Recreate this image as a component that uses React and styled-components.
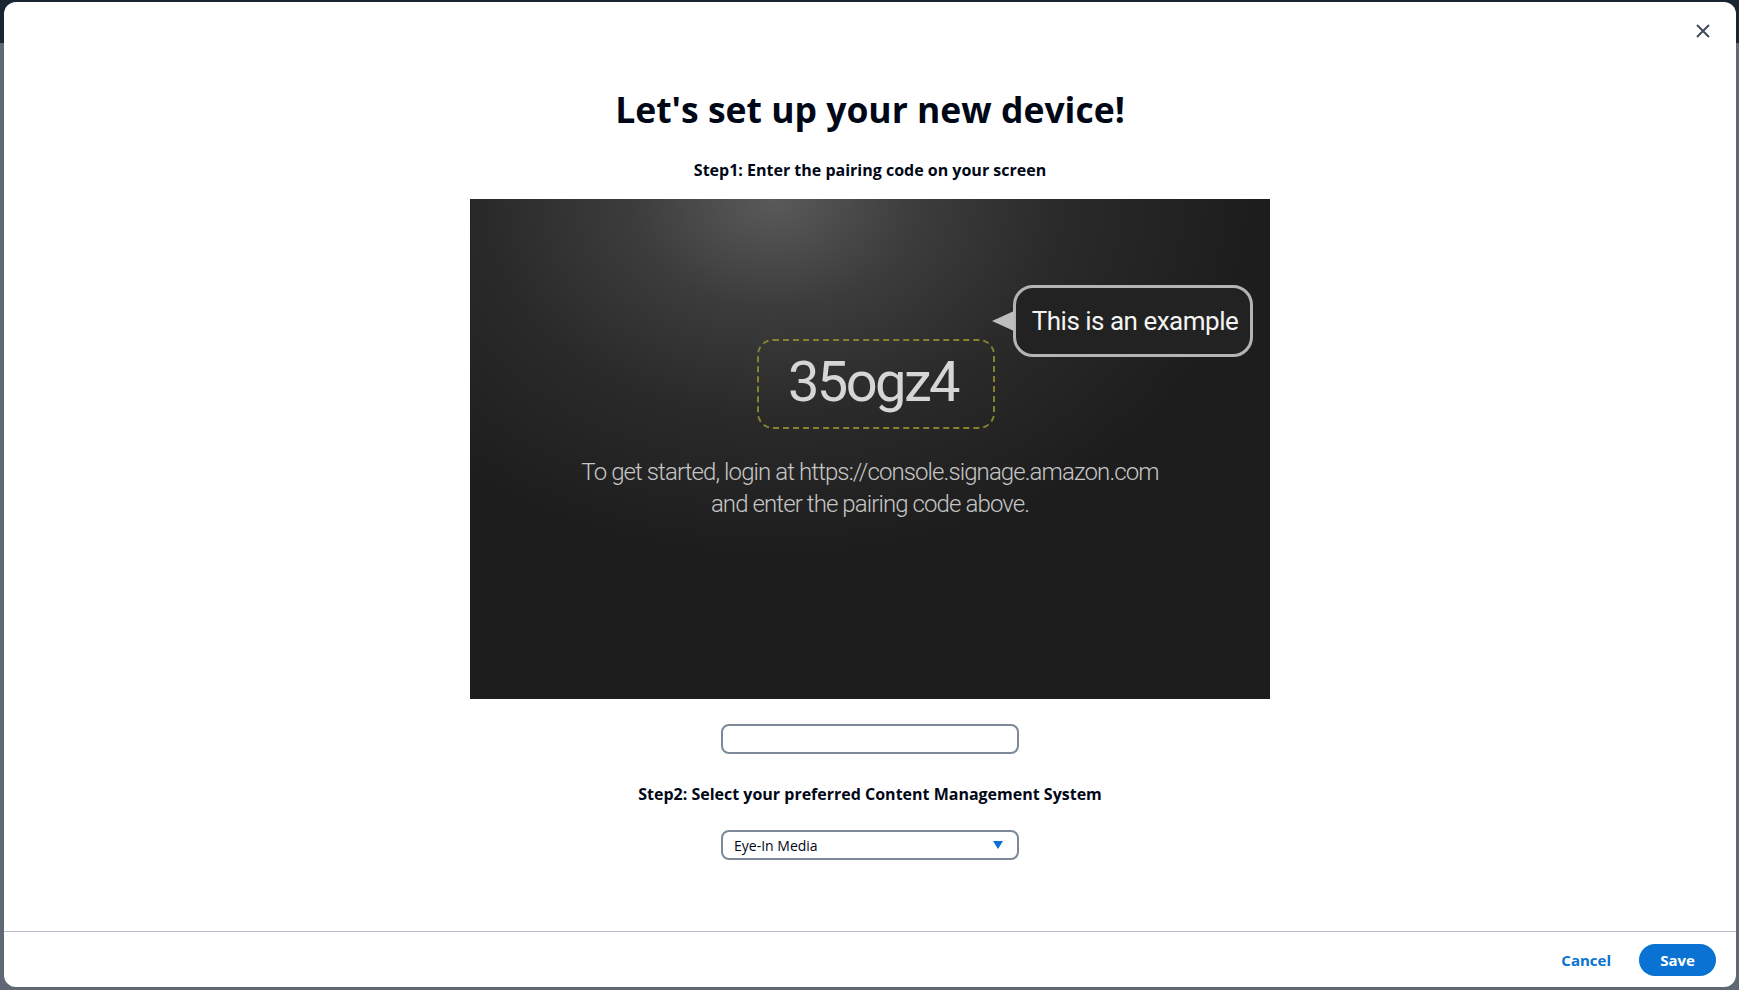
import React from 'react'
import styled, { createGlobalStyle } from 'styled-components'

const GlobalStyle = createGlobalStyle`
  html, body {
    margin: 0;
    padding: 0;
  }
  body {
    font-family: "Open Sans", "Noto Sans", sans-serif;
    color: #000716;
  }
  * {
    box-sizing: border-box;
  }
`

const Backdrop = styled.div`
  width: 1739px;
  height: 990px;
  padding: 2px 3px 3px 4px;
  background: linear-gradient(#1b2531 0, #1b2531 43px, #5f6873 43px, #5f6873 100%);
  display: flex;
`

const Modal = styled.div`
  position: relative;
  flex: 1;
  display: flex;
  flex-direction: column;
  background: #fff;
  border-radius: 12px;
  overflow: hidden;
`

const CloseButton = styled.button`
  position: absolute;
  top: 19px;
  right: 23px;
  width: 20px;
  height: 20px;
  padding: 0;
  border: none;
  background: none;
  display: flex;
  align-items: center;
  justify-content: center;
  cursor: pointer;
`

const Body = styled.div`
  flex: 1;
  display: flex;
  flex-direction: column;
  align-items: center;
  padding-top: 85px;
`

const Title = styled.h1`
  margin: 0;
  font-size: 35.5px;
  line-height: 44px;
  font-weight: 700;
  color: #000716;
`

const StepLabel = styled.p`
  margin: ${p => p.$top}px 0 0;
  font-size: 16px;
  line-height: 22px;
  font-weight: 700;
  color: #000716;
`

const Screen = styled.div`
  position: relative;
  margin-top: 18px;
  width: 800px;
  height: 500px;
  background-color: #1d1d1d;
  background-image: radial-gradient(ellipse 480px 360px at 38% 0%, #5a5a5a 0%, #3c3c3c 30%, #2a2a2a 60%, #1d1d1d 100%);
  font-family: Roboto, "Liberation Sans", sans-serif;
`

const CodeBox = styled.div`
  position: absolute;
  left: 287px;
  top: 140px;
  width: 238px;
  height: 90px;
  border: 2px dashed #858230;
  border-radius: 16px;
  display: flex;
  align-items: center;
  justify-content: center;
  color: #d6d6d6;
  font-size: 56px;
  letter-spacing: -2.6px;
  font-weight: 400;
  padding: 0 6px 4px 0;
`

const Bubble = styled.div`
  position: absolute;
  left: 543px;
  top: 86px;
  width: 240px;
  height: 72px;
  border: 3px solid #b4b4b4;
  border-radius: 20px;
  background: #222;
  display: flex;
  align-items: center;
  justify-content: center;
  color: #f4f4f4;
  font-size: 26px;
  letter-spacing: -0.5px;
  padding-left: 4px;

  &::before {
    content: '';
    position: absolute;
    left: -24px;
    top: 33px;
    border-style: solid;
    border-width: 10px 22px 10px 0;
    border-color: transparent #bdbdbd transparent transparent;
    transform: translateY(-50%);
  }
`

const ScreenText = styled.div`
  position: absolute;
  left: 0;
  right: 0;
  top: 257px;
  text-align: center;
  color: #c6c6c6;
  font-size: 24px;
  font-weight: 300;
  line-height: 32px;
  letter-spacing: -0.9px;
`

const Field = styled.div`
  margin-top: ${p => p.$top}px;
  width: 298px;
  height: 30px;
  border: 2px solid #7d8998;
  border-radius: 8px;
  background: #fff;
  display: flex;
  align-items: center;
  justify-content: space-between;
  padding: 0 14px 0 11px;
  font-size: 14px;
  color: #000716;
`

const Caret = styled.span`
  width: 0;
  height: 0;
  border-style: solid;
  border-width: 8px 5.5px 0 5.5px;
  border-color: #0972d3 transparent transparent transparent;
`

const Footer = styled.div`
  height: 56px;
  border-top: 1px solid #b6bec9;
  display: flex;
  align-items: center;
  justify-content: flex-end;
  gap: 24px;
  padding-right: 20px;
`

const TextButton = styled.button`
  border: none;
  background: none;
  padding: 0 4px;
  font-family: "Open Sans", sans-serif;
  font-size: 15px;
  font-weight: 700;
  color: #0972d3;
  cursor: pointer;
`

const PrimaryButton = styled.button`
  width: 77px;
  height: 32px;
  border: none;
  border-radius: 16px;
  background: #0972d3;
  color: #fff;
  font-family: "Open Sans", sans-serif;
  font-size: 15px;
  font-weight: 700;
  cursor: pointer;
`

const App = () => {
  return (
    <>
      <GlobalStyle />
      <Backdrop>
        <Modal>
          <CloseButton aria-label="Close">
            <svg width="16" height="16" viewBox="0 0 16 16">
              <path d="M2 2 L14 14 M14 2 L2 14" stroke="#414d5c" strokeWidth="2" fill="none" />
            </svg>
          </CloseButton>
          <Body>
            <Title>Let's set up your new device!</Title>
            <StepLabel $top={28}>Step1: Enter the pairing code on your screen</StepLabel>
            <Screen>
              <CodeBox>35ogz4</CodeBox>
              <Bubble>This is an example</Bubble>
              <ScreenText>
                To get started, login at https://console.signage.amazon.com
                <br />
                and enter the pairing code above.
              </ScreenText>
            </Screen>
            <Field $top={25} />
            <StepLabel $top={29}>Step2: Select your preferred Content Management System</StepLabel>
            <Field $top={25}>
              <span>Eye-In Media</span>
              <Caret />
            </Field>
          </Body>
          <Footer>
            <TextButton>Cancel</TextButton>
            <PrimaryButton>Save</PrimaryButton>
          </Footer>
        </Modal>
      </Backdrop>
    </>
  )
}

export default App
